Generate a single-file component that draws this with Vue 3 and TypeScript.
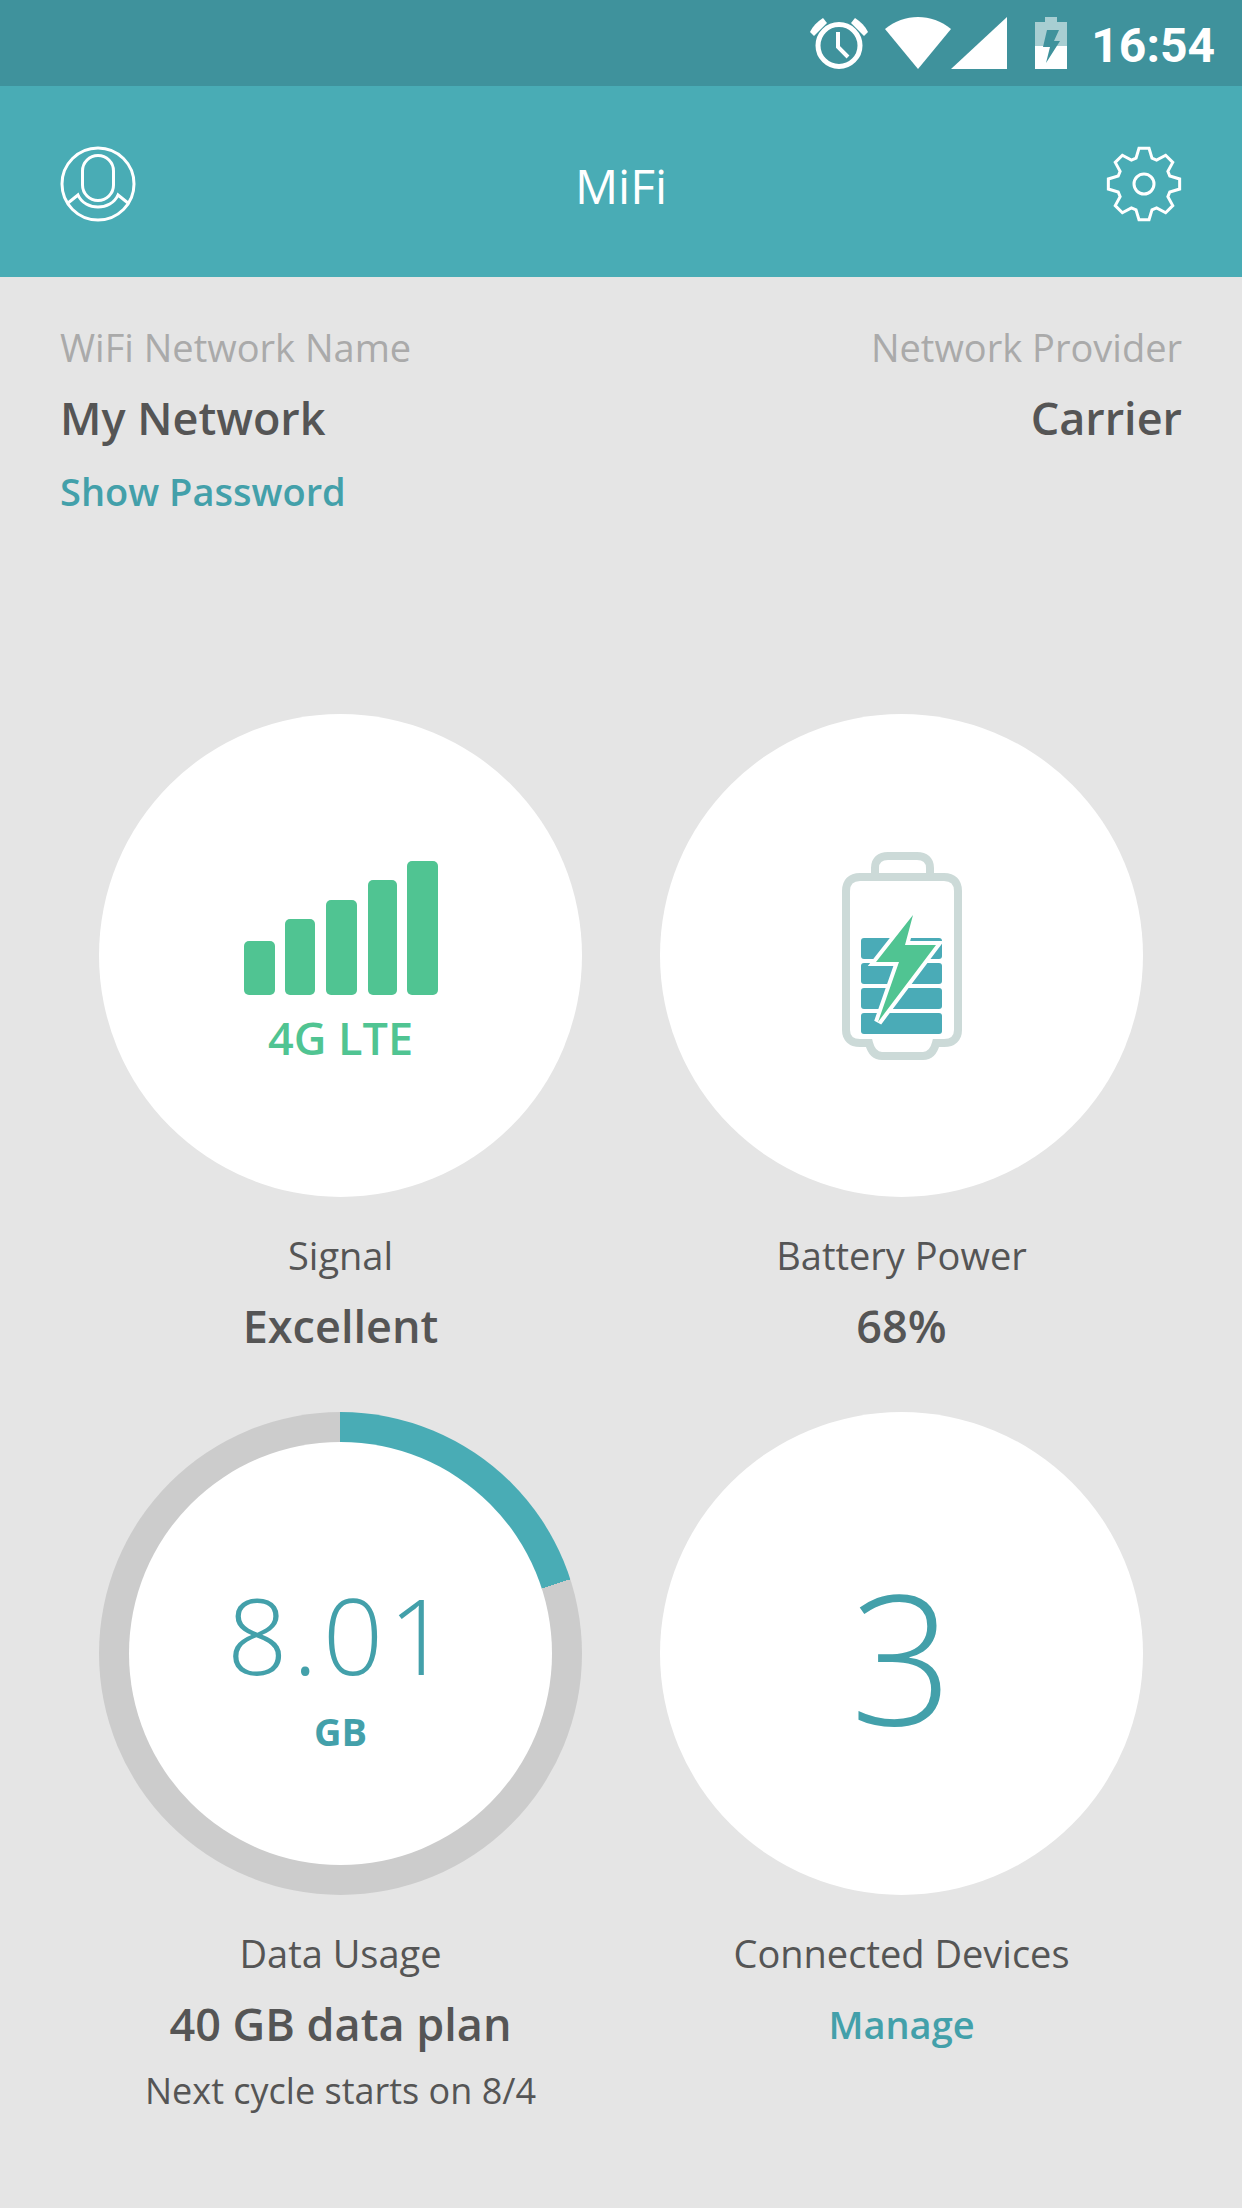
<script setup lang="ts">
import { computed } from 'vue';

const usedGb = 8.01;
const planGb = 40;
const usedDeg = computed<number>(() => (usedGb / planGb) * 360);

const signalBars = [
	{ x: 0, w: 31, top: 80 },
	{ x: 41, w: 30, top: 58 },
	{ x: 82, w: 31, top: 39 },
	{ x: 124, w: 29, top: 19 },
	{ x: 163, w: 31, top: 0 },
];

const batteryBars = [938, 963, 988, 1013];

// 8 tooth gear outline around 0,0
const gearPoints = computed<string>(() => {
	const pts: string[] = [];
	for (let i = 0; i < 8; i++) {
		const a = (i * Math.PI) / 4 - Math.PI / 2;
		const add = (r: number, off: number) => {
			pts.push(`${(r * Math.cos(a + off)).toFixed(2)},${(r * Math.sin(a + off)).toFixed(2)}`);
		};
		add(27, -0.3);
		add(36, -0.14);
		add(36, 0.14);
		add(27, 0.3);
	}
	return pts.join(' ');
});
</script>

<template>
	<div class="screen">
		<div class="status-bar">
			<svg class="st-alarm" width="58" height="52" viewBox="0 0 58 52">
				<circle cx="29" cy="28.5" r="21" fill="none" stroke="#fff" stroke-width="5" />
				<path d="M28 15V30L38 40" fill="none" stroke="#fff" stroke-width="4" />
				<path d="M0 15C3 9 7 5 13 1L17 6L4 19Z" fill="#fff" />
				<path d="M58 15C55 9 51 5 45 1L41 6L54 19Z" fill="#fff" />
			</svg>
			<svg class="st-wifi" width="66" height="52" viewBox="0 0 66 52">
				<path d="M0 12C19 -4 47 -4 66 12L33 52Z" fill="#fff" />
			</svg>
			<svg class="st-signal" width="56" height="52" viewBox="0 0 56 52">
				<path d="M56 0V52H0Z" fill="#fff" />
			</svg>
			<svg class="st-battery" width="32" height="52" viewBox="0 0 32 52">
				<path d="M10 0H22V5H32V29H0V5H10Z" fill="#fff" fill-opacity="0.55" />
				<path d="M0 29H32V52H0Z" fill="#fff" />
				<path d="M12 13H24L19 24H25L11 46L15 30H8Z" fill="#3f929c" />
			</svg>
			<span class="time">16:54</span>
		</div>

		<header class="app-bar">
			<svg width="76" height="76" viewBox="0 0 76 76" fill="none" stroke="#fff" stroke-width="3">
				<circle cx="38" cy="38" r="36" />
				<rect x="22.5" y="9.5" width="31" height="45" rx="15.5" />
				<path d="M8 57L18 49C25 65 51 65 58 49L68 57" />
			</svg>
			<span class="app-title">MiFi</span>
			<svg width="76" height="76" viewBox="-38 -38 76 76" fill="none" stroke="#fff" stroke-width="3">
				<polygon :points="gearPoints" />
				<circle r="10" />
			</svg>
		</header>

		<section class="network">
			<div>
				<div class="muted">WiFi Network Name</div>
				<div class="strong">My Network</div>
				<a class="link">Show Password</a>
			</div>
			<div class="network-right">
				<div class="muted">Network Provider</div>
				<div class="strong">Carrier</div>
			</div>
		</section>

		<section class="grid">
			<div class="cell">
				<div class="circle signal">
					<svg width="194" height="134" viewBox="0 0 194 134">
						<rect
							v-for="b in signalBars"
							:key="b.x"
							:x="b.x"
							:y="b.top"
							:width="b.w"
							:height="134 - b.top"
							rx="5"
							fill="#50c492"
						/>
					</svg>
					<span class="lte">4G LTE</span>
				</div>
				<div class="label">Signal</div>
				<div class="strong">Excellent</div>
			</div>

			<div class="cell">
				<div class="circle">
					<svg width="124" height="212" viewBox="840 850 124 212">
						<path
							d="M875 877V868C875 860 880 856 888 856H917C925 856 930 860 930 868V877H944C953 877 958 882 958 891V1030C958 1038 953 1043 944 1043H936C934 1051 930 1056 923 1056H882C875 1056 871 1051 869 1043H860C851 1043 846 1038 846 1030V891C846 882 851 877 860 877Z"
							fill="#fff"
							stroke="#ccdad8"
							stroke-width="8"
						/>
						<path d="M875 877H930" stroke="#ccdad8" stroke-width="8" />
						<rect
							v-for="y in batteryBars"
							:key="y"
							x="861"
							:y="y"
							width="81"
							height="21"
							rx="3"
							fill="#4aabb7"
						/>
						<path
							d="M913 915L876 962H899L878 1022L936 945H905Z"
							fill="#50c492"
							stroke="#fff"
							stroke-width="8"
							stroke-linejoin="miter"
							paint-order="stroke"
						/>
					</svg>
				</div>
				<div class="label">Battery Power</div>
				<div class="strong">68%</div>
			</div>

			<div class="cell">
				<div
					class="ring"
					:style="{ background: `conic-gradient(#49acb5 0 ${usedDeg}deg, #cccccc ${usedDeg}deg 360deg)` }"
				>
					<div class="ring-inner">
						<span class="usage">{{ usedGb }}</span>
						<span class="unit">GB</span>
					</div>
				</div>
				<div class="label">Data Usage</div>
				<div class="strong">{{ planGb }} GB data plan</div>
				<div class="label next">Next cycle starts on 8/4</div>
			</div>

			<div class="cell">
				<div class="circle">
					<span class="devices">3</span>
				</div>
				<div class="label">Connected Devices</div>
				<a class="link manage">Manage</a>
			</div>
		</section>
	</div>
</template>

<style scoped>
.screen {
	width: 1242px;
	height: 2208px;
	overflow: hidden;
	background: #e5e5e5;
	color: #555;
	font-family: "Open Sans", sans-serif;
}
.status-bar {
	height: 86px;
	box-sizing: border-box;
	padding: 17px 27px 0 0;
	background: #3f929c;
	display: flex;
	justify-content: flex-end;
	align-items: flex-start;
}
.st-wifi {
	margin-left: 17px;
}
.st-battery {
	margin-left: 28px;
}
.time {
	margin-left: 24px;
	margin-top: 3px;
	color: #fff;
	font: 700 48px/52px Roboto, sans-serif;
}
.app-bar {
	height: 191px;
	box-sizing: border-box;
	padding: 5px 60px 0;
	background: #49acb5;
	display: flex;
	justify-content: space-between;
	align-items: center;
}
.app-title {
	margin-top: 3px;
	color: #fff;
	font-size: 48px;
}
.network {
	height: 437px;
	box-sizing: border-box;
	padding: 35px 60px 0;
	display: flex;
	justify-content: space-between;
}
.network-right {
	text-align: right;
}
.muted {
	color: #aaa;
	font-size: 38px;
	line-height: 70px;
}
.strong {
	padding-top: 1px;
	font-size: 45px;
	font-weight: 600;
	line-height: 70px;
	color: #555;
}
.link {
	display: block;
	margin-top: 3px;
	color: #43a0aa;
	font-size: 38px;
	font-weight: 600;
	line-height: 70px;
}
.grid {
	padding: 0 99px;
	display: grid;
	grid-template-columns: 483px 483px;
	grid-auto-rows: 698px;
	column-gap: 78px;
}
.cell {
	text-align: center;
}
.circle,
.ring {
	width: 483px;
	height: 483px;
	margin-bottom: 23px;
	border-radius: 50%;
	display: flex;
	flex-direction: column;
	align-items: center;
	justify-content: center;
}
.circle {
	background: #fff;
}
.signal {
	padding-top: 22px;
	box-sizing: border-box;
}
.lte {
	margin-top: 8px;
	color: #50c492;
	font-size: 45px;
	font-weight: 600;
	line-height: 70px;
}
.ring-inner {
	width: 423px;
	height: 423px;
	border-radius: 50%;
	background: #fff;
	display: flex;
	flex-direction: column;
	align-items: center;
}
.usage {
	margin-top: 127px;
	color: #43a0aa;
	font-size: 106px;
	font-weight: 300;
	letter-spacing: 5px;
	line-height: 130px;
}
.unit {
	margin-top: 7px;
	color: #43a0aa;
	font-size: 38px;
	font-weight: 700;
	line-height: 50px;
}
.devices {
	padding-top: 4px;
	color: #43a0aa;
	font-size: 180px;
	font-weight: 300;
	line-height: 1;
}
.label {
	font-size: 38px;
	line-height: 70px;
}
.next {
	margin-top: -3px;
	font-size: 36px;
}
.manage {
	margin-top: 1px;
	font-size: 38px;
}
</style>

<style>
body {
	background: #e5e5e5;
}
</style>
